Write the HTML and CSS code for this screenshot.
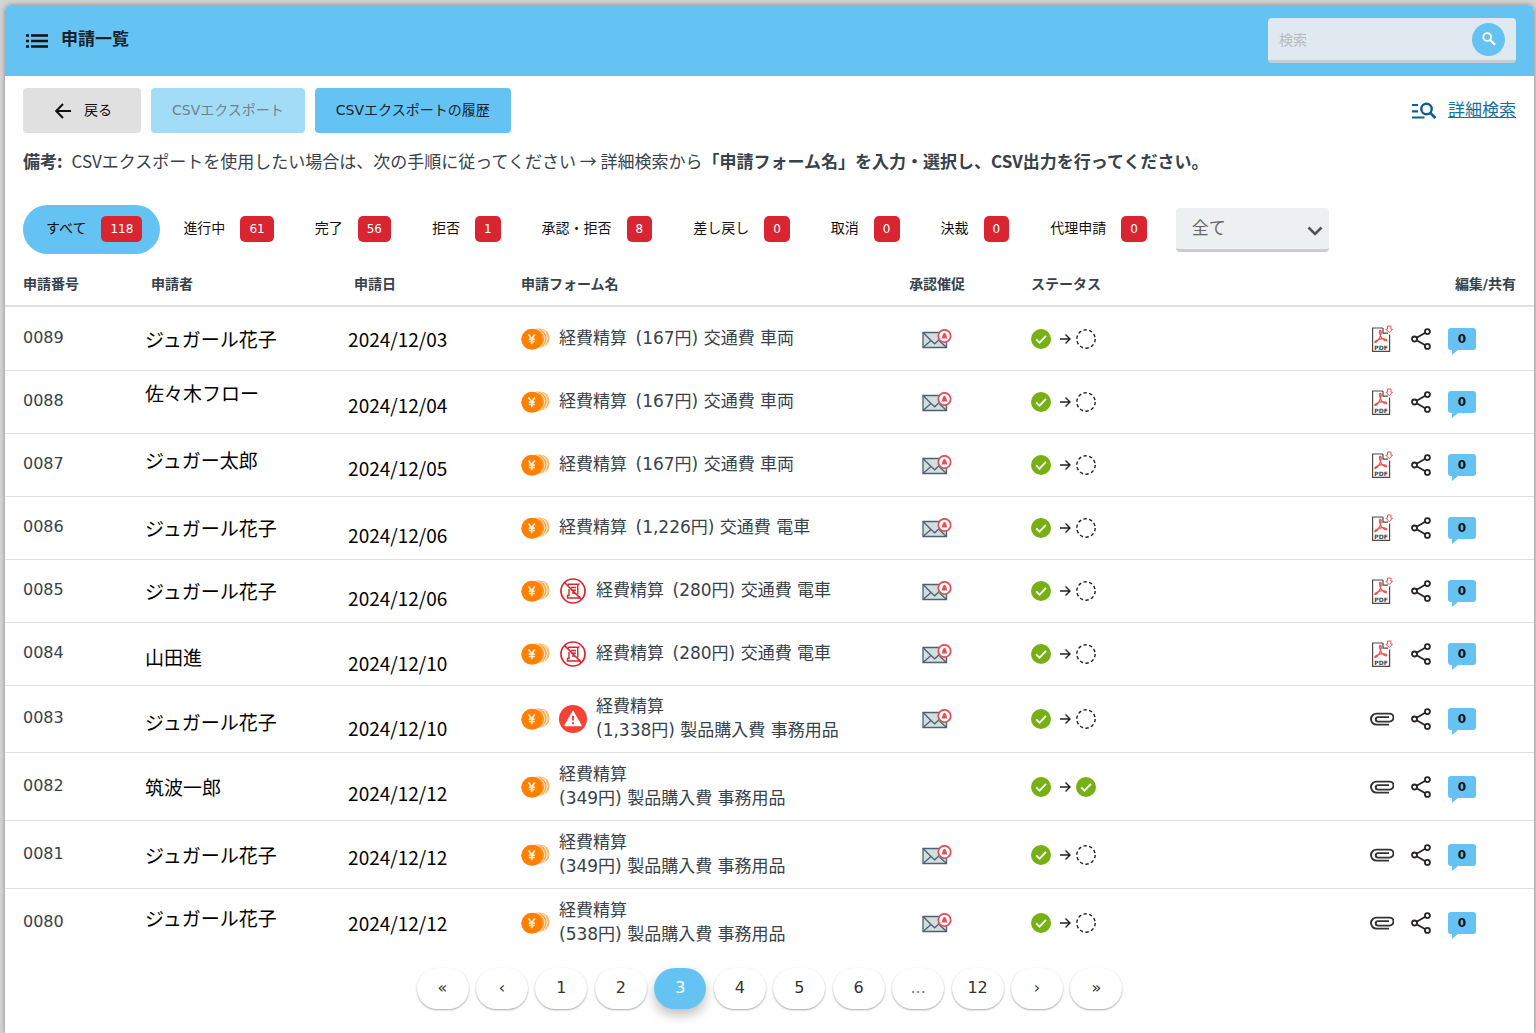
FILE: index.html
```html
<!DOCTYPE html>
<html lang="ja">
<head>
<meta charset="utf-8">
<meta name="viewport" content="width=device-width, initial-scale=1">
<title>申請一覧</title>
<link rel="stylesheet" href="styles.css">
</head>
<body>
<svg class="sprite" aria-hidden="true">
  <symbol id="coin" viewBox="0 0 29 22">
    <circle cx="19" cy="10" r="9.600" fill="#ffb766"/>
    <circle cx="16.800" cy="10.300" r="9.800" fill="#fff"/>
    <circle cx="16" cy="10.400" r="9.800" fill="#ffa747"/>
    <circle cx="13.900" cy="10.700" r="10" fill="#fff"/>
    <circle cx="13.200" cy="10.900" r="10" fill="#ff9524"/>
    <circle cx="10.700" cy="11.300" r="10.500" fill="#ff8000"/>
    <path d="M7.500 6.500l3.300 4.300 3-4.300M10.800 10.800v5.400M7.800 11.200h6M7.800 13.500h6" fill="none" stroke="#ffeeda" stroke-width="1.700"/>
  </symbol>
  <symbol id="mail" viewBox="0 0 30 20">
    <path d="M1 3.500h23.500v15H1z" fill="#d3dedf" stroke="#4b6273" stroke-width="1.300"/>
    <path d="M1 3.500l8 8L1 18.500M24.500 18.500l-7-6.500M9 11.500l3.700 3.300 4.300-4 4-4" fill="none" stroke="#4b6273" stroke-width="1.300"/>
    <circle cx="22.500" cy="7" r="6.200" fill="#fff" stroke="#e0525c" stroke-width="1.800"/>
    <path d="M19.400 9.600c1.200-.8.600-5 3.100-5.800 2.500.8 1.900 5 3.100 5.800z" fill="#e0525c"/>
  </symbol>
  <symbol id="check" viewBox="0 0 20 20">
    <circle cx="10" cy="10" r="10" fill="#76b013"/>
    <path d="M5.200 10.400l3.300 3.200 6.500-6.800" fill="none" stroke="#fff" stroke-width="1.800"/>
  </symbol>
  <symbol id="arrow" viewBox="0 0 11 12">
    <path d="M0 6h9.800M5.500 1.500L10 6l-4.500 4.500" fill="none" stroke="#222" stroke-width="1.400"/>
  </symbol>
  <symbol id="pending" viewBox="0 0 20 20">
    <circle cx="10" cy="10" r="9.200" fill="none" stroke="#222" stroke-width="1.400" stroke-dasharray="3.400 2.380"/>
  </symbol>
  <symbol id="pdf" viewBox="0 0 22 28">
    <path d="M12 3H1.600v23.400h17V9.500M12 3v5.200h5" fill="none" stroke="#4a4a4a" stroke-width="1.200"/>
    <path d="M9 5.500c2.200-.2.900 4.500-.3 7C7.300 15.500 5 18 4 17.500c-1-.8 2.500-3.200 6-3.700s6 .8 5.600 1.700c-.6 1-3.700-.8-5.200-3C9 10.200 7.800 5.600 9 5.500z" fill="none" stroke="#f0524f" stroke-width="1.300"/>
    <path d="M16.500 1h3.400v3.200h1.600l-3.300 3.400-3.300-3.400h1.600z" fill="#fff" stroke="#f0524f"/>
    <text x="10" y="24.500" text-anchor="middle" class="pdf-label">PDF</text>
  </symbol>
  <symbol id="share" viewBox="0 0 20 22">
    <path d="M16.400 3.500L3.500 11l12.900 7.500" fill="none" stroke="#2b2424" stroke-width="1.800"/>
    <g fill="#fff" stroke="#2b2424" stroke-width="1.800"><circle cx="16.400" cy="3.600" r="2.500"/><circle cx="3.500" cy="11" r="2.500"/><circle cx="16.400" cy="18.400" r="2.500"/></g>
  </symbol>
  <symbol id="clip" viewBox="0 0 24 14">
    <path d="M19 12.600H6.500a5.300 5.300 0 0 1 0-11H19.500a4 4 0 0 1 0 8H8a2 2 0 0 1 0-4.500h11" fill="none" stroke="#333" stroke-width="1.900"/>
  </symbol>
  <symbol id="noreceipt" viewBox="0 0 26 26">
    <circle cx="13" cy="13" r="12" fill="none" stroke="#d9232e" stroke-width="1.700"/>
    <path d="M8.500 7.500V6.300h10c-1.600 1.200-.7 3-.7 5.200v5M9 11v6.500H7.500V20H17M11 9.500h5M11.500 12.300h4.500M12 15h3M17 20h2.500v-2" fill="none" stroke="#d9232e" stroke-width="1.400"/>
    <path d="M4.500 4.500l17 17" stroke="#d9232e" stroke-width="1.700"/>
  </symbol>
  <symbol id="warn" viewBox="0 0 28 28">
    <circle cx="14" cy="14" r="14" fill="#f44336"/>
    <path d="M14 6.500l8 14H6z" fill="#fff" stroke="#fff" stroke-width="1.500" stroke-linejoin="round"/>
    <path d="M14 10.800v4.700M14 17.200v2" stroke="#f44336" stroke-width="2"/>
  </symbol>
</svg>

<main class="card">
  <header class="topbar">
    <svg class="list-icon" viewBox="0 0 22 14" aria-hidden="true"><path d="M0 1.500h3M5 1.500h17M0 7h3M5 7h17M0 12.500h3M5 12.500h17" stroke="#111" stroke-width="2.400"/></svg>
    <h1 class="title">申請一覧</h1>
    <form class="search" role="search">
      <input class="search-input" type="search" placeholder="検索" aria-label="検索">
      <button class="search-button" type="button" aria-label="検索する">
        <svg width="14" height="14" viewBox="0 0 14 14"><circle cx="5.200" cy="5" r="3.900" fill="none" stroke="#fff" stroke-width="1.800"/><path d="M8 7.800l5 5" stroke="#fff" stroke-width="2.200"/></svg>
      </button>
    </form>
  </header>

  <div class="toolbar">
    <button class="button button-back" type="button">
      <svg width="16" height="16" viewBox="0 0 16 16" aria-hidden="true"><path d="M16 8H1.500M8 1L1.200 8 8 15" fill="none" stroke="#111" stroke-width="2"/></svg>
      <span class="label">戻る</span>
    </button>
    <button class="button" type="button" disabled><span class="label">CSVエクスポート</span></button>
    <button class="button" type="button"><span class="label">CSVエクスポートの履歴</span></button>
    <div class="advanced">
      <svg width="24" height="18" viewBox="0 0 24 18" aria-hidden="true"><path d="M0 3h6M0 9.300h6M0 15.500h12.500" stroke="#0b5f8a" stroke-width="2.200"/><circle cx="14.500" cy="7" r="5.200" fill="none" stroke="#0b5f8a" stroke-width="2.400"/><path d="M18 10.500l5.300 5.500" stroke="#0b5f8a" stroke-width="2.600"/></svg>
      <a href="#">詳細検索</a>
    </div>
  </div>

  <p class="note"><b class="note-label">備考:</b>CSVエクスポートを使用したい場合は、次の手順に従ってください → 詳細検索から<b>「申請フォーム名」を入力・選択し、CSV出力を行ってください。</b></p>

  <nav class="filters" aria-label="絞り込み">
    <button class="tab tab-active" type="button"><span class="label">すべて</span><span class="count">118</span></button>
    <button class="tab" type="button"><span class="label">進行中</span><span class="count">61</span></button>
    <button class="tab" type="button"><span class="label">完了</span><span class="count">56</span></button>
    <button class="tab" type="button"><span class="label">拒否</span><span class="count">1</span></button>
    <button class="tab" type="button"><span class="label">承認・拒否</span><span class="count">8</span></button>
    <button class="tab" type="button"><span class="label">差し戻し</span><span class="count">0</span></button>
    <button class="tab" type="button"><span class="label">取消</span><span class="count">0</span></button>
    <button class="tab" type="button"><span class="label">決裁</span><span class="count">0</span></button>
    <button class="tab" type="button"><span class="label">代理申請</span><span class="count">0</span></button>
    <div class="select-box">
      <select class="select" aria-label="種別"><option>全て</option></select>
      <svg class="select-arrow" width="16" height="10" viewBox="0 0 16 10" aria-hidden="true"><path d="M1.500 1.500L8 8l6.500-6.500" fill="none" stroke="#555" stroke-width="2.600"/></svg>
    </div>
  </nav>

  <table class="list">
    <colgroup><col class="col-no"><col class="col-name"><col class="col-date"><col class="col-form"><col class="col-mail"><col class="col-status"><col></colgroup>
    <thead>
      <tr><th>申請番号</th><th>申請者</th><th>申請日</th><th>申請フォーム名</th><th>承認催促</th><th>ステータス</th><th>編集/共有</th></tr>
    </thead>
    <tbody>
      <tr>
        <td>0089</td><td>ジュガール花子</td><td>2024/12/03</td>
        <td><div class="form"><svg class="i-coin"><use href="#coin"/></svg><span>経費精算&ensp;(167円) 交通費 車両</span></div></td>
        <td><svg class="i-mail"><use href="#mail"/></svg></td>
        <td><div class="status"><svg class="i-state"><use href="#check"/></svg><svg class="i-arrow"><use href="#arrow"/></svg><svg class="i-state"><use href="#pending"/></svg></div></td>
        <td><div class="actions"><svg class="i-file"><use href="#pdf"/></svg><svg class="i-share"><use href="#share"/></svg><button class="bubble" type="button">0</button></div></td>
      </tr>
      <tr>
        <td>0088</td><td class="higher">佐々木フロー</td><td class="low">2024/12/04</td>
        <td><div class="form"><svg class="i-coin"><use href="#coin"/></svg><span>経費精算&ensp;(167円) 交通費 車両</span></div></td>
        <td><svg class="i-mail"><use href="#mail"/></svg></td>
        <td><div class="status"><svg class="i-state"><use href="#check"/></svg><svg class="i-arrow"><use href="#arrow"/></svg><svg class="i-state"><use href="#pending"/></svg></div></td>
        <td><div class="actions"><svg class="i-file"><use href="#pdf"/></svg><svg class="i-share"><use href="#share"/></svg><button class="bubble" type="button">0</button></div></td>
      </tr>
      <tr>
        <td>0087</td><td class="high">ジュガー太郎</td><td class="low">2024/12/05</td>
        <td><div class="form"><svg class="i-coin"><use href="#coin"/></svg><span>経費精算&ensp;(167円) 交通費 車両</span></div></td>
        <td><svg class="i-mail"><use href="#mail"/></svg></td>
        <td><div class="status"><svg class="i-state"><use href="#check"/></svg><svg class="i-arrow"><use href="#arrow"/></svg><svg class="i-state"><use href="#pending"/></svg></div></td>
        <td><div class="actions"><svg class="i-file"><use href="#pdf"/></svg><svg class="i-share"><use href="#share"/></svg><button class="bubble" type="button">0</button></div></td>
      </tr>
      <tr>
        <td>0086</td><td>ジュガール花子</td><td class="lower">2024/12/06</td>
        <td><div class="form"><svg class="i-coin"><use href="#coin"/></svg><span>経費精算&ensp;(1,226円) 交通費 電車</span></div></td>
        <td><svg class="i-mail"><use href="#mail"/></svg></td>
        <td><div class="status"><svg class="i-state"><use href="#check"/></svg><svg class="i-arrow"><use href="#arrow"/></svg><svg class="i-state"><use href="#pending"/></svg></div></td>
        <td><div class="actions"><svg class="i-file"><use href="#pdf"/></svg><svg class="i-share"><use href="#share"/></svg><button class="bubble" type="button">0</button></div></td>
      </tr>
      <tr>
        <td>0085</td><td>ジュガール花子</td><td class="lower">2024/12/06</td>
        <td><div class="form"><svg class="i-coin"><use href="#coin"/></svg><svg class="i-alert"><use href="#noreceipt" x="1" y="1" width="26" height="26"/></svg><span>経費精算&ensp;(280円) 交通費 電車</span></div></td>
        <td><svg class="i-mail"><use href="#mail"/></svg></td>
        <td><div class="status"><svg class="i-state"><use href="#check"/></svg><svg class="i-arrow"><use href="#arrow"/></svg><svg class="i-state"><use href="#pending"/></svg></div></td>
        <td><div class="actions"><svg class="i-file"><use href="#pdf"/></svg><svg class="i-share"><use href="#share"/></svg><button class="bubble" type="button">0</button></div></td>
      </tr>
      <tr>
        <td>0084</td><td class="low">山田進</td><td class="lowest">2024/12/10</td>
        <td><div class="form"><svg class="i-coin"><use href="#coin"/></svg><svg class="i-alert"><use href="#noreceipt" x="1" y="1" width="26" height="26"/></svg><span>経費精算&ensp;(280円) 交通費 電車</span></div></td>
        <td><svg class="i-mail"><use href="#mail"/></svg></td>
        <td><div class="status"><svg class="i-state"><use href="#check"/></svg><svg class="i-arrow"><use href="#arrow"/></svg><svg class="i-state"><use href="#pending"/></svg></div></td>
        <td><div class="actions"><svg class="i-file"><use href="#pdf"/></svg><svg class="i-share"><use href="#share"/></svg><button class="bubble" type="button">0</button></div></td>
      </tr>
      <tr class="medium">
        <td>0083</td><td class="low">ジュガール花子</td><td class="lowest">2024/12/10</td>
        <td><div class="form"><svg class="i-coin"><use href="#coin"/></svg><svg class="i-alert"><use href="#warn"/></svg><span>経費精算<br>(1,338円) 製品購入費 事務用品</span></div></td>
        <td><svg class="i-mail"><use href="#mail"/></svg></td>
        <td><div class="status"><svg class="i-state"><use href="#check"/></svg><svg class="i-arrow"><use href="#arrow"/></svg><svg class="i-state"><use href="#pending"/></svg></div></td>
        <td><div class="actions"><svg class="i-file"><use href="#clip"/></svg><svg class="i-share"><use href="#share"/></svg><button class="bubble" type="button">0</button></div></td>
      </tr>
      <tr class="tall">
        <td>0082</td><td>筑波一郎</td><td class="lower">2024/12/12</td>
        <td><div class="form"><svg class="i-coin"><use href="#coin"/></svg><span>経費精算<br>(349円) 製品購入費 事務用品</span></div></td>
        <td></td>
        <td><div class="status"><svg class="i-state"><use href="#check"/></svg><svg class="i-arrow"><use href="#arrow"/></svg><svg class="i-state"><use href="#check"/></svg></div></td>
        <td><div class="actions"><svg class="i-file"><use href="#clip"/></svg><svg class="i-share"><use href="#share"/></svg><button class="bubble" type="button">0</button></div></td>
      </tr>
      <tr class="tall">
        <td>0081</td><td>ジュガール花子</td><td class="low">2024/12/12</td>
        <td><div class="form"><svg class="i-coin"><use href="#coin"/></svg><span>経費精算<br>(349円) 製品購入費 事務用品</span></div></td>
        <td><svg class="i-mail"><use href="#mail"/></svg></td>
        <td><div class="status"><svg class="i-state"><use href="#check"/></svg><svg class="i-arrow"><use href="#arrow"/></svg><svg class="i-state"><use href="#pending"/></svg></div></td>
        <td><div class="actions"><svg class="i-file"><use href="#clip"/></svg><svg class="i-share"><use href="#share"/></svg><button class="bubble" type="button">0</button></div></td>
      </tr>
      <tr class="tall">
        <td>0080</td><td class="high">ジュガール花子</td><td>2024/12/12</td>
        <td><div class="form"><svg class="i-coin"><use href="#coin"/></svg><span>経費精算<br>(538円) 製品購入費 事務用品</span></div></td>
        <td><svg class="i-mail"><use href="#mail"/></svg></td>
        <td><div class="status"><svg class="i-state"><use href="#check"/></svg><svg class="i-arrow"><use href="#arrow"/></svg><svg class="i-state"><use href="#pending"/></svg></div></td>
        <td><div class="actions"><svg class="i-file"><use href="#clip"/></svg><svg class="i-share"><use href="#share"/></svg><button class="bubble" type="button">0</button></div></td>
      </tr>
    </tbody>
  </table>

  <nav class="pager" aria-label="ページ">
    <button class="page" type="button">«</button>
    <button class="page" type="button">‹</button>
    <button class="page" type="button">1</button>
    <button class="page" type="button">2</button>
    <button class="page page-current" type="button" aria-current="page">3</button>
    <button class="page" type="button">4</button>
    <button class="page" type="button">5</button>
    <button class="page" type="button">6</button>
    <button class="page page-gap" type="button" disabled>...</button>
    <button class="page" type="button">12</button>
    <button class="page" type="button">›</button>
    <button class="page" type="button">»</button>
  </nav>
</main>
</body>
</html>
```
FILE: styles.css
```css
:root {
  --blue: #64c3f2;
  --line: #e0e0e0;
  --ui: "DejaVu Sans", "Noto Sans CJK JP", sans-serif;
}

* { box-sizing: border-box; }

body {
  margin: 0;
  padding: 5px 2px 0 5px;
  background: #d4d4d4;
  color: #37424a;
  font-family: var(--ui);
  font-size: 17px;
  line-height: 24px;
}

button, input, select { font-family: inherit; }
button { border: 0; padding: 0; cursor: pointer; }
svg { display: block; flex: none; }
.sprite { display: none; }

.card {
  min-height: calc(100vh - 5px);
  background: #fff;
  border-radius: 6px 6px 0 0;
  box-shadow: 0 0 5px #888;
}

.topbar {
  display: flex;
  align-items: center;
  height: 71px;
  padding: 0 18px 0 21px;
  background: var(--blue);
  border-radius: 6px 6px 0 0;
}
.list-icon { width: 22px; height: 14px; }
.title {
  margin: 0 auto 0 13px;
  padding-bottom: 4px;
  color: #15222b;
  font-size: 17px;
  line-height: 24px;
}
.search {
  display: flex;
  align-items: center;
  width: 248px;
  height: 45px;
  padding: 0 11px;
  background: #dfe9ef;
  border-bottom: 3px solid #c8ced2;
  border-radius: 4px;
}
.search-input {
  flex: 1;
  min-width: 0;
  padding: 2px 0 0;
  border: 0;
  outline: 0;
  background: none;
  font-size: 14px;
}
.search-input::placeholder { color: #b7babd; }
.search-button {
  display: grid;
  place-items: center;
  width: 33px;
  height: 33px;
  background: var(--blue);
  border-radius: 50%;
}

.toolbar {
  display: flex;
  align-items: center;
  gap: 10px;
  padding: 12px 18px 0;
}
.button {
  display: flex;
  align-items: center;
  gap: 13px;
  height: 45px;
  padding: 0 21px;
  background: var(--blue);
  border-radius: 4px;
  color: #16242d;
  font-size: 14px;
}
.button:disabled { background: #a2dcf7; color: #70828c; }
.button-back { padding: 0 29px 0 32px; background: #e0e0e0; color: #111; }
.label { padding-bottom: 3px; }
.advanced {
  display: flex;
  align-items: center;
  gap: 12px;
  margin-left: auto;
}
.advanced a { padding-bottom: 2px; color: #17709c; }

.note {
  margin: 16px 18px 0;
  font-family: "Noto Sans CJK JP", sans-serif;
}
.note-label { margin-right: 9px; }

.filters {
  display: flex;
  align-items: center;
  margin: 32px 18px 0;
}
.tab {
  display: flex;
  align-items: center;
  gap: 15px;
  height: 49px;
  padding: 0 18px 2px 23px;
  background: none;
  border-radius: 25px;
  color: #111;
  font-size: 14px;
}
.tab-active { background: var(--blue); }
.count {
  padding: 0 9px;
  background: #d92532;
  border-radius: 5px;
  color: #fff;
  font-size: 12px;
  line-height: 26px;
}
.select-box {
  position: relative;
  margin-left: 11px;
}
.select {
  display: block;
  width: 153px;
  height: 44px;
  padding: 0 16px;
  appearance: none;
  background: #ecf0f1;
  border: 0;
  border-bottom: 3px solid #ccc;
  border-radius: 4px;
  color: #666;
  font-size: 17px;
}
.select-arrow { position: absolute; right: 6px; top: 18px; pointer-events: none; }

.list {
  width: 100%;
  border-collapse: separate;
  border-spacing: 0;
  table-layout: fixed;
}
.col-no { width: 9.160%; }
.col-name { width: 13.280%; }
.col-date { width: 11.310%; }
.col-form { width: 22.900%; }
.col-mail { width: 8.630%; }
.col-status { width: 13%; }

th {
  height: 53px;
  padding: 8px 0 0 6px;
  border-bottom: 2px solid var(--line);
  font-size: 14px;
  text-align: left;
  vertical-align: middle;
}
th:nth-child(1) { padding-left: 18px; }
th:nth-child(4) { padding-left: 0; }
th:nth-child(5) { padding-left: 0; text-align: center; }
th:nth-child(6) { padding-left: 28px; }
th:nth-child(7) { padding-right: 18px; text-align: right; }

td {
  height: 63px;
  padding: 0;
  border-bottom: 1px solid var(--line);
  vertical-align: middle;
}
tbody tr:first-child td { height: 64px; }
.medium td { height: 67px; }
.tall td { height: 68px; }
tbody tr:last-child td { border-bottom: 0; }
td:nth-child(1) { padding: 0 0 2px 18px; font-size: 16px; }
td:nth-child(2), td:nth-child(3) {
  color: #000;
  font-family: "Noto Sans CJK JP", sans-serif;
  font-size: 19px;
}
td:nth-child(5) svg { margin: 0 auto; }
td:nth-child(6) { padding-left: 28px; }
td:nth-child(7) { padding-right: 58px; }
td.higher { padding-bottom: 18px; }
td.high { padding-bottom: 10px; }
td.low { padding-top: 5px; }
td.lower { padding-top: 13px; }
td.lowest { padding-top: 18px; }

.form { display: flex; align-items: center; gap: 9px; white-space: nowrap; }
.form span { padding-bottom: 2px; }
.status { display: flex; align-items: center; gap: 5px; }
.status .i-arrow { margin-left: 4px; }
.actions { display: flex; align-items: center; justify-content: flex-end; gap: 17px; }

.i-coin { width: 29px; height: 22px; }
.i-alert { width: 28px; height: 28px; }
.i-mail { width: 30px; height: 20px; }
.i-state { width: 20px; height: 20px; }
.i-arrow { width: 11px; height: 12px; }
.i-file { width: 24px; height: 28px; }
.i-share { width: 20px; height: 22px; }
.pdf-label { font: bold 6px "DejaVu Sans", sans-serif; fill: #444; }

.bubble {
  position: relative;
  width: 28px;
  height: 22px;
  background: var(--blue);
  border-radius: 3px;
  color: #111;
  font-size: 12px;
  font-weight: bold;
}
.bubble::after {
  content: "";
  position: absolute;
  left: 4px;
  top: 22px;
  border-top: 5px solid var(--blue);
  border-right: 6px solid transparent;
}

.pager {
  display: flex;
  justify-content: space-between;
  max-width: 706px;
  margin: 0 auto;
  padding: 11px 0 24px;
}
.page {
  width: 52px;
  height: 41px;
  padding-bottom: 2px;
  background: #fff;
  border-radius: 21px;
  box-shadow: 0 1px 2px rgba(0, 0, 0, 0.35);
  color: #333;
  font-size: 16px;
}
.page-current {
  background: var(--blue);
  box-shadow: 0 6px 12px rgba(0, 0, 0, 0.25);
  color: #fff;
}
.page-gap { color: #777; }
```
